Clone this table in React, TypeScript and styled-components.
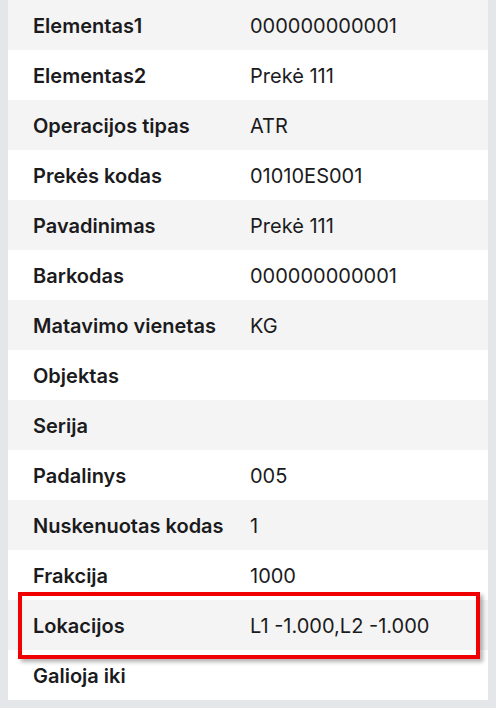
import React from 'react';
import styled, { createGlobalStyle } from 'styled-components';

const GlobalStyle = createGlobalStyle`
  html, body {
    margin: 0;
    padding: 0;
    background: #e5e6ea;
  }
  body {
    font-family: Inter, "Noto Sans", sans-serif;
  }
`;

const Page = styled.div`
  padding: 0 8px 8px 8px;
  width: 496px;
  height: 708px;
  box-sizing: border-box;
  overflow: hidden;
`;

const Table = styled.div`
  position: relative;
  background: #ffffff;
  display: flex;
  flex-direction: column;
`;

const Row = styled.div<{ $shaded: boolean }>`
  display: grid;
  grid-template-columns: 217px 1fr;
  height: 50px;
  box-sizing: border-box;
  padding-top: 2px;
  align-items: center;
  background: ${(p) => (p.$shaded ? '#f4f4f4' : '#ffffff')};
`;

const Label = styled.div`
  padding-left: 25px;
  font-size: 20px;
  font-weight: 600;
  color: #1b1b1d;
  white-space: nowrap;
`;

const Value = styled.div`
  padding-left: 25px;
  font-size: 20px;
  font-weight: 400;
  color: #1b1b1d;
  white-space: nowrap;
`;

// annotation box drawn over the Lokacijos row
const Highlight = styled.div`
  position: absolute;
  left: 10px;
  top: 592px;
  width: 462px;
  height: 67px;
  box-sizing: border-box;
  border: 4px solid #f00000;
  box-shadow: 3px 3px 4px rgba(0, 0, 0, 0.3);
  pointer-events: none;
`;

const rows: [string, string][] = [
  ['Elementas1', '000000000001'],
  ['Elementas2', 'Prekė 111'],
  ['Operacijos tipas', 'ATR'],
  ['Prekės kodas', '01010ES001'],
  ['Pavadinimas', 'Prekė 111'],
  ['Barkodas', '000000000001'],
  ['Matavimo vienetas', 'KG'],
  ['Objektas', ''],
  ['Serija', ''],
  ['Padalinys', '005'],
  ['Nuskenuotas kodas', '1'],
  ['Frakcija', '1000'],
  ['Lokacijos', 'L1 -1.000,L2 -1.000'],
  ['Galioja iki', ''],
];

const App = () => (
  <>
    <GlobalStyle />
    <Page>
      <Table>
        {rows.map(([label, value], i) => (
          <Row key={label} $shaded={i % 2 === 0}>
            <Label>{label}</Label>
            <Value>{value}</Value>
          </Row>
        ))}
        <Highlight />
      </Table>
    </Page>
  </>
);

export default App;
